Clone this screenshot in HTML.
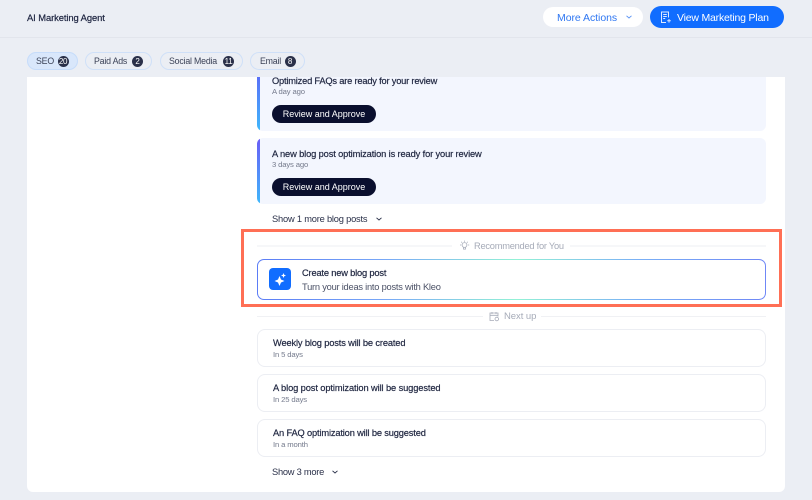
<!DOCTYPE html>
<html><head><meta charset="utf-8">
<style>
html,body{margin:0;padding:0}
body{width:812px;height:500px;background:#ebeef4;position:relative;overflow:hidden;font-family:"Liberation Sans",sans-serif;color:#1b2238}
.a{position:absolute}
.t{position:absolute;white-space:nowrap;line-height:12px}
.title{font-size:9.3px;color:#1f2640;-webkit-text-stroke:.2px #1f2640}
.sub{font-size:7.7px;color:#747a8c;letter-spacing:-.15px}
.tab{position:absolute;top:52px;height:16px;border:1px solid #cfe0f8;border-radius:9px}
.tl{position:absolute;top:55px;font-size:8.8px;letter-spacing:-.2px;color:#3b4257;white-space:nowrap;line-height:12px}
.bd{position:absolute;top:55.500px;width:11px;height:11px;border-radius:50%;background:#2a3049;color:#fff;font-size:8px;line-height:11px;text-align:center;letter-spacing:-.3px}
.card{position:absolute;left:257px;width:509px;background:#f3f6fe;border-radius:6px}
.bar{position:absolute;left:0;top:0;bottom:0;width:3px;background:linear-gradient(180deg,#6a5cf6,#3fb8fb)}
.btn{position:absolute;left:272px;width:104px;height:18px;background:#0a0f2e;border-radius:9px;color:#fff;font-size:9px;line-height:18px;text-align:center}
.nx{position:absolute;left:257px;width:507px;height:36px;background:#fff;border:1px solid #eceef3;border-radius:8px}
.ln{position:absolute;height:1px;background:#f0f1f4}
.ln2{position:absolute;height:2px;background:#f6f7f9}
</style></head><body>
<div class="a" style="left:0;top:37px;width:812px;height:1px;background:#e2e5ec"></div>
<div class="t" style="left:27px;top:11.500px;font-size:9.4px;letter-spacing:-.08px;color:#1d2440;-webkit-text-stroke:.2px #1d2440">AI Marketing Agent</div>

<div class="a" style="left:543px;top:7px;width:100px;height:20px;background:#fff;border-radius:10px"></div>
<div class="t" style="left:557px;top:11.500px;font-size:10.5px;letter-spacing:-.05px;color:#2f77f2">More Actions</div>
<svg class="a" style="left:625px;top:14px" width="8" height="6" viewBox="0 0 8 6"><path d="M1.500 1.800L4 4L6.500 1.800" fill="none" stroke="#5a93f4" stroke-width=".9"/></svg>
<div class="a" style="left:650px;top:6px;width:134px;height:22px;background:#116dff;border-radius:11px"></div>
<svg class="a" style="left:660px;top:11px" width="12" height="13" viewBox="0 0 12 13" fill="none" stroke="#dfeaff" stroke-width="1"><path d="M6 11.500H1.500V1h7v5.500M3.200 3.500h3.600M3.200 5.500h3.600M3.200 7.500h2"/><path d="M9 8v3.600M7.200 9.800h3.600"/></svg>
<div class="t" style="left:677px;top:11.500px;font-size:10.5px;letter-spacing:-.2px;color:#fff">View Marketing Plan</div>

<div class="tab" style="left:27px;width:49px;background:#d9e7fb;border-color:#c6dcfa"></div>
<div class="tl" style="left:36px">SEO</div><div class="bd" style="left:57.500px">20</div>
<div class="tab" style="left:85px;width:65px"></div>
<div class="tl" style="left:94px">Paid Ads</div><div class="bd" style="left:132px">2</div>
<div class="tab" style="left:160px;width:81px"></div>
<div class="tl" style="left:169px">Social Media</div><div class="bd" style="left:223px">11</div>
<div class="tab" style="left:250px;width:53px"></div>
<div class="tl" style="left:260px">Email</div><div class="bd" style="left:284.500px">8</div>

<div class="a" style="left:27px;top:77px;width:758px;height:415px;background:#fff;border-radius:0 0 6px 6px"></div>

<div class="card" style="top:77px;height:54px;border-radius:0 0 6px 6px;overflow:hidden"><div class="bar" style="background:linear-gradient(180deg,#5a70f8,#3fb8fb)"></div></div>
<div class="t title" style="left:272px;top:75px;letter-spacing:-.2px">Optimized FAQs are ready for your review</div>
<div class="t sub" style="left:272px;top:85.500px">A day ago</div>
<div class="btn" style="top:104.500px">Review and Approve</div>

<div class="card" style="top:138px;height:66px;overflow:hidden"><div class="bar"></div></div>
<div class="t title" style="left:272px;top:147.500px;letter-spacing:-.13px">A new blog post optimization is ready for your review</div>
<div class="t sub" style="left:272px;top:158.500px">3 days ago</div>
<div class="btn" style="top:177.500px">Review and Approve</div>

<div class="t" style="left:272px;top:213px;font-size:9.3px;letter-spacing:-.2px;color:#2a3049">Show 1 more blog posts</div>
<svg class="a" style="left:375px;top:216px" width="8" height="6" viewBox="0 0 8 6"><path d="M1.500 1.800L4 4L6.500 1.800" fill="none" stroke="#2a3049" stroke-width=".9"/></svg>

<div class="ln2" style="left:257px;top:245px;width:195px"></div>
<div class="ln2" style="left:570px;top:245px;width:196px"></div>
<svg class="a" style="left:459px;top:240px" width="11" height="11" viewBox="0 0 11 11" fill="none" stroke="#a6abb8" stroke-width=".8"><circle cx="5.500" cy="5" r="2.400"/><path d="M4.500 7.500v1.600h2V7.500M5.500 .6v1.200M1 5h1.200M9 5h1.200M2.300 1.800l.8.800M8.700 1.800l-.8.800"/></svg>
<div class="t" style="left:474px;top:240px;font-size:9.3px;letter-spacing:-.25px;color:#a6abb8">Recommended for You</div>

<div class="a" style="left:257px;top:259px;width:509px;height:41px;border-radius:7px;background:linear-gradient(90deg,#5b7cf6 0%,#78a8f7 25%,#93f2d6 51%,#7ab0f6 75%,#6f87f6 100%)"></div>
<div class="a" style="left:258px;top:260px;width:507px;height:39px;border-radius:6px;background:#fff"></div>
<div class="a" style="left:269px;top:268px;width:22px;height:22px;background:#116dff;border-radius:4px"></div>
<svg class="a" style="left:269px;top:268px" width="22" height="22" viewBox="0 0 22 22" fill="#fff"><path d="M10.500 8L12 11.500l3.500 1.500L12 14.500 10.500 18 9 14.500 5.500 13 9 11.500z"/><path d="M14.500 5l.7 1.800L17 7.500l-1.800.7L14.500 10l-.7-1.800L12 7.500l1.800-.7z"/></svg>
<div class="t title" style="left:302px;top:266.500px;letter-spacing:-.18px">Create new blog post</div>
<div class="t" style="left:302px;top:281px;font-size:9.3px;letter-spacing:-.23px;color:#4b5166">Turn your ideas into posts with Kleo</div>

<div class="a" style="left:241px;top:229px;width:534.500px;height:72px;border:3px solid #ff6f55"></div>

<div class="ln" style="left:257px;top:316px;width:226px"></div>
<div class="ln" style="left:541px;top:316px;width:225px"></div>
<svg class="a" style="left:489px;top:311px" width="11" height="11" viewBox="0 0 11 11" fill="none" stroke="#a6abb8" stroke-width=".8"><path d="M5 9.500H1V2h8v3.500M1 4.300h8M3 1v2M7 1v2"/><circle cx="7.800" cy="8" r="1.800"/></svg>
<div class="t" style="left:504px;top:310.500px;font-size:9.5px;letter-spacing:-.05px;color:#a6abb8">Next up</div>

<div class="nx" style="top:329px"></div>
<div class="t title" style="left:273px;top:336.500px;letter-spacing:-.15px">Weekly blog posts will be created</div>
<div class="t sub" style="left:273px;top:348.500px">In 5 days</div>
<div class="nx" style="top:374px"></div>
<div class="t title" style="left:273px;top:381.500px;letter-spacing:-.11px">A blog post optimization will be suggested</div>
<div class="t sub" style="left:273px;top:393.500px">In 25 days</div>
<div class="nx" style="top:419px"></div>
<div class="t title" style="left:273px;top:426.500px;letter-spacing:-.16px">An FAQ optimization will be suggested</div>
<div class="t sub" style="left:273px;top:438.500px">In a month</div>

<div class="t" style="left:272px;top:465.500px;font-size:9.3px;letter-spacing:-.25px;color:#2a3049">Show 3 more</div>
<svg class="a" style="left:331px;top:469px" width="8" height="6" viewBox="0 0 8 6"><path d="M1.500 1.800L4 4L6.500 1.800" fill="none" stroke="#2a3049" stroke-width=".9"/></svg>
</body></html>
